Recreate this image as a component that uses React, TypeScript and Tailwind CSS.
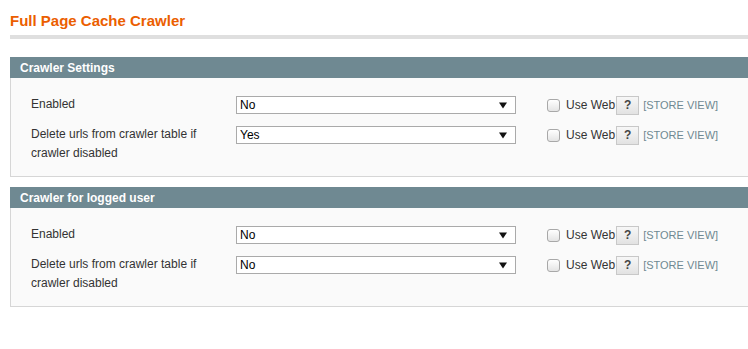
import React from 'react'

type Field = { label: string; value: string }

const SECTIONS: Array<{ title: string; fields: Field[] }> = [
  {
    title: 'Crawler Settings',
    fields: [
      { label: 'Enabled', value: 'No' },
      { label: 'Delete urls from crawler table if crawler disabled', value: 'Yes' },
    ],
  },
  {
    title: 'Crawler for logged user',
    fields: [
      { label: 'Enabled', value: 'No' },
      { label: 'Delete urls from crawler table if crawler disabled', value: 'No' },
    ],
  },
]

function FakeSelect({ value }: { value: string }) {
  return (
    <div className="mt-px flex h-[18px] w-[280px] items-center justify-between border border-[#aaaaaa] bg-white pl-[3px] pr-[8px] text-[12px] leading-none text-black">
      <span>{value}</span>
      <svg width="8" height="7" viewBox="0 0 8 7">
        <path d="M0 0.5 H8 L4 6.5 Z" fill="#111" />
      </svg>
    </div>
  )
}

function FieldRow({ field }: { field: Field }) {
  return (
    <div className="flex items-start">
      <div className="w-[205px] pr-[10px] text-[12px] leading-[19px] text-[#333]">{field.label}</div>
      <FakeSelect value={field.value} />
      <div className="ml-[31px] flex h-[20px] items-center">
        <span className="h-[13px] w-[13px] rounded-[3px] border border-[#a8a8a8] bg-gradient-to-b from-white to-[#e4e4e4]" />
        <span className="ml-[6px] text-[12px] text-[#333]">Use Web</span>
        <span className="ml-px flex h-[19px] w-[23px] items-center justify-center border border-[#c8c8c8] bg-gradient-to-b from-[#f7f7f7] to-[#e2e2e2] text-[12px] font-bold text-[#444]">
          ?
        </span>
        <span className="ml-[4px] text-[11px] text-[#6f8992]">[STORE VIEW]</span>
      </div>
    </div>
  )
}

export default function App() {
  return (
    <div
      className="h-[349px] w-[748px] overflow-hidden bg-white pl-[10px]"
      style={{ fontFamily: '"Liberation Sans", Arial, sans-serif' }}
    >
      <h3 className="pt-[12px] text-[15px] font-bold leading-[18px] text-[#eb5e00]">Full Page Cache Crawler</h3>
      <div className="mt-[5px] h-[4px] w-[760px] bg-[#dfdfdf]" />

      <div className="mt-[18px] w-[760px]">
        {SECTIONS.map((section, i) => (
          <div key={section.title} className={i > 0 ? 'mt-[10px]' : ''}>
            <div className="flex h-[21px] items-center bg-[#6f8992] px-[10px] text-[12px] font-bold text-white">
              {section.title}
            </div>
            <div className="flex flex-col gap-[10px] border border-t-0 border-[#d6d6d6] bg-[#fafafa] pb-[13px] pl-[20px] pt-[17px]">
              {section.fields.map(field => (
                <FieldRow key={field.label} field={field} />
              ))}
            </div>
          </div>
        ))}
      </div>
    </div>
  )
}
